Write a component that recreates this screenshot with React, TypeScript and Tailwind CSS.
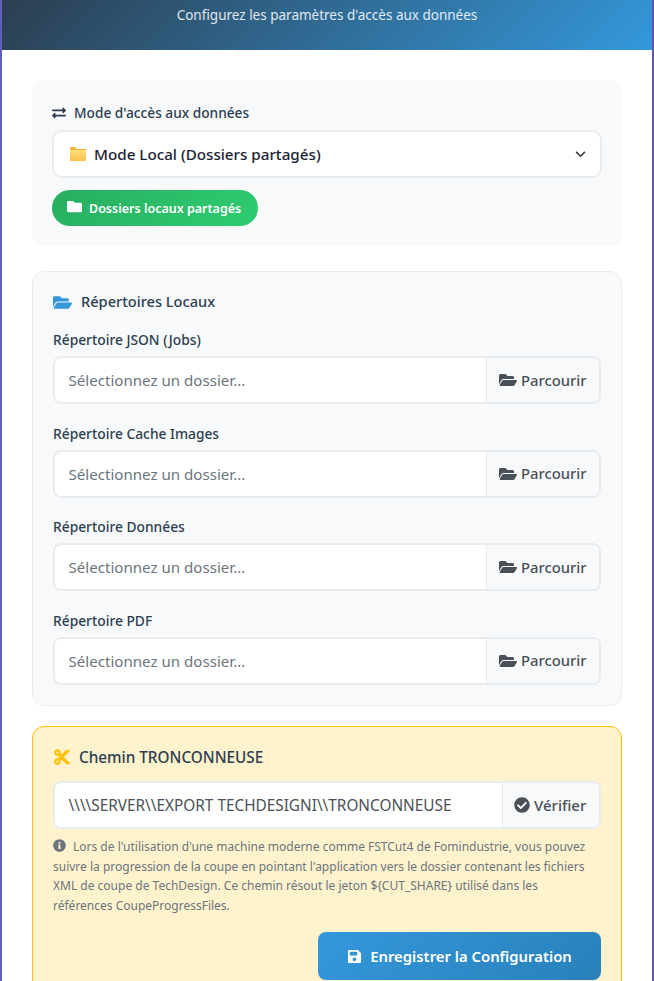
import { FaCheckCircle, FaCut, FaExchangeAlt, FaFolder, FaFolderOpen, FaInfoCircle, FaSave } from "react-icons/fa";

const FOLDERS = ["Répertoire JSON (Jobs)", "Répertoire Cache Images", "Répertoire Données", "Répertoire PDF"];

function PathField({ value, placeholder, action }: { value?: string; placeholder?: string; action: "browse" | "check" }) {
  return (
    <div className="flex h-[48px] overflow-hidden rounded-[8px] border-2 border-[#e9ecef] bg-white">
      <div className={`flex-1 truncate pl-[13.5px] leading-[44px] ${value ? "text-[15.35px] text-[#495057]" : "text-[15.1px] text-[#6c757d]"}`}>
        {value ?? placeholder}
      </div>
      {action === "browse" ? (
        <div className="flex w-[113px] items-center gap-[4px] border-l border-[#e9ecef] bg-[#f8f9fa] pl-[12px] text-[14.8px] font-medium text-[#495057]">
          <FaFolderOpen className="text-[18px]" />
          <span>Parcourir</span>
        </div>
      ) : (
        <div className="flex w-[97px] items-center gap-[4px] border-l border-[#e9ecef] bg-[#f8f9fa] pl-[11px] text-[15px] font-medium text-[#495057]">
          <FaCheckCircle className="text-[16px]" />
          <span>Vérifier</span>
        </div>
      )}
    </div>
  );
}

export default function App() {
  return (
    <div className="h-[981px] overflow-hidden bg-[linear-gradient(90deg,#6060b8,#6555aa)] px-[2px] font-['Noto_Sans',sans-serif]">
      <div className="h-full bg-white">
        <header className="h-[50px] bg-[linear-gradient(135deg,#2c3e50,#3498db)] pt-[5px] text-center text-[13.5px] leading-[20px] text-white/85">
          Configurez les paramètres d'accès aux données
        </header>

        <div className="px-[30px] pt-[30px]">
          <section className="h-[166px] rounded-[12px] bg-[#f8f9fa] px-[20px] pt-[24px]">
            <div className="flex h-[18px] items-center gap-[8px] text-[13.7px] font-medium text-[#2c3e50]">
              <FaExchangeAlt className="text-[14px]" />
              <span>Mode d'accès aux données</span>
            </div>
            <div className="mt-[8px] flex h-[48px] items-center rounded-[10px] border-2 border-[#e9ecef] bg-white pl-[16px] pr-[14px]">
              <svg viewBox="0 0 16 14" className="h-[14px] w-[16px]">
                <defs>
                  <linearGradient id="folderFill" x1="0" y1="0" x2="0" y2="1">
                    <stop offset="0" stopColor="#ffdf7a" />
                    <stop offset="1" stopColor="#ffc04d" />
                  </linearGradient>
                </defs>
                <path d="M0 1C0 .4.4 0 1 0h4l1.5 2H16v12H0z" fill="#f9b233" />
                <path d="M0 3h16v11H0z" fill="url(#folderFill)" />
              </svg>
              <span className="ml-[8px] flex-1 text-[15.2px] font-medium text-[#1a2333]">Mode Local (Dossiers partagés)</span>
              <svg viewBox="0 0 12 8" className="h-[7px] w-[11px]" fill="none" stroke="#343a40" strokeWidth="1.7">
                <path d="M1 1l5 5 5-5" />
              </svg>
            </div>
            <div className="mt-[12px] flex h-[36px] w-[206px] items-center gap-[7px] rounded-[18px] bg-[linear-gradient(135deg,#27ae60,#2ecc71)] pl-[15px] text-[12.5px] font-semibold text-white">
              <FaFolder className="mb-[3px] text-[15px]" />
              <span className="mt-[3px]">Dossiers locaux partagés</span>
            </div>
          </section>

          <section className="mt-[25px] h-[435px] rounded-[12px] border border-[#e9ecef] bg-[#f8f9fa] px-[20px] pt-[19px]">
            <h3 className="flex h-[22px] items-center gap-[9px] text-[14.6px] font-medium text-[#2c3e50]">
              <FaFolderOpen className="text-[19px] text-[#3498db]" />
              <span>Répertoires Locaux</span>
            </h3>
            <div className="mt-[17px] flex flex-col gap-[19.5px]">
              {FOLDERS.map((label) => (
                <div key={label}>
                  <label className="block h-[26px] text-[13.8px] font-medium leading-[20px] text-[#2c3e50]">{label}</label>
                  <PathField placeholder="Sélectionnez un dossier..." action="browse" />
                </div>
              ))}
            </div>
          </section>

          <section className="mt-[20px] h-[300px] rounded-[12px] border border-[#ffc107] bg-[#fff3cd] px-[20px] pt-[20px]">
            <h3 className="flex h-[20px] items-center gap-[8px] text-[15.3px] font-medium text-[#2c3e50]">
              <FaCut className="text-[18px] text-[#ffc107]" />
              <span>Chemin TRONCONNEUSE</span>
            </h3>
            <div className="mt-[14px]">
              <PathField value="\\\\SERVER\\EXPORT TECHDESIGNI\\TRONCONNEUSE" action="check" />
            </div>
            <p className="mt-[8px] text-[12px] leading-[19.5px] text-[#6c757d]">
              <FaInfoCircle className="mr-[7px] inline align-[-1px] text-[13px]" />
              {"Lors de l'utilisation d'une machine moderne comme FSTCut4 de Fomindustrie, vous pouvez suivre la progression de la coupe en pointant l'application vers le dossier contenant les fichiers XML de coupe de TechDesign. Ce chemin résout le jeton ${CUT_SHARE} utilisé dans les"}
              <br />
              références CoupeProgressFiles.
            </p>
            <div className="mt-[17px] flex justify-end">
              <div className="flex h-[48px] w-[283px] items-center justify-center gap-[8px] rounded-[8px] bg-[linear-gradient(135deg,#3498db,#2980b9)] text-[14.85px] font-semibold text-white">
                <FaSave className="text-[15px]" />
                <span>Enregistrer la Configuration</span>
              </div>
            </div>
          </section>
        </div>
      </div>
    </div>
  );
}
